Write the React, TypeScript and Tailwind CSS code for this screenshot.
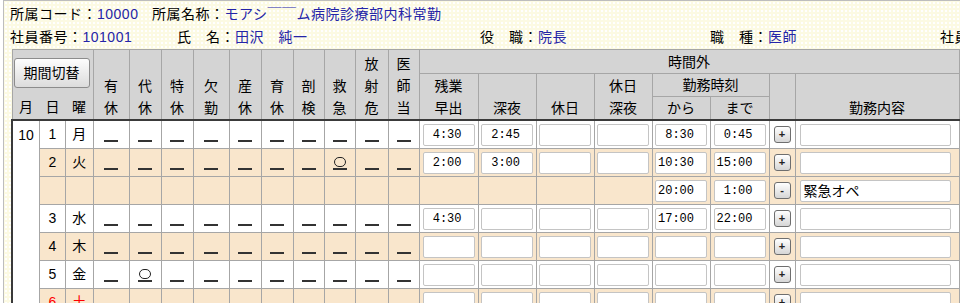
import React from "react";

const cols = [27, 26, 27, 36, 32, 32, 36, 32, 32, 31, 31, 33, 31, 59, 58, 58, 58, 58, 59, 26, 164];

const leaves = [
  ["有", "休"],
  ["代", "休"],
  ["特", "休"],
  ["欠", "勤"],
  ["産", "休"],
  ["育", "休"],
  ["剖", "検"],
  ["救", "急"],
  ["放", "射", "危"],
  ["医", "師", "当"],
];

type Row = {
  day?: string;
  wd?: string;
  peach: boolean;
  red?: boolean;
  sub?: boolean;
  mark?: number;
  t: (string | null)[];
  btn: string;
  memo?: string;
};

const rows: Row[] = [
  { day: "1", wd: "月", peach: false, t: [" 4:30", " 2:45", "", "", " 8:30", " 0:45"], btn: "+" },
  { day: "2", wd: "火", peach: true, mark: 7, t: [" 2:00", " 3:00", "", "", "10:30", "15:00"], btn: "+" },
  { peach: true, sub: true, t: [null, null, null, null, "20:00", " 1:00"], btn: "-", memo: "緊急オペ" },
  { day: "3", wd: "水", peach: false, t: [" 4:30", "", "", "", "17:00", "22:00"], btn: "+" },
  { day: "4", wd: "木", peach: true, t: ["", "", "", "", "", ""], btn: "+" },
  { day: "5", wd: "金", peach: false, mark: 1, t: ["", "", "", "", "", ""], btn: "+" },
  { day: "6", wd: "土", peach: true, red: true, t: ["", "", "", "", "", ""], btn: "+" },
];

const th = "border border-[#a6a6a6] p-0 font-normal text-[14px] leading-[22px] text-black";
const td = "border border-[#a6a6a6] p-0";

function TimeBox({ v }: { v: string }) {
  return (
    <div className="w-[52px] h-[22px] mx-auto border border-[#c4c4c4] rounded-[2px] bg-white pl-[2px] text-left whitespace-pre font-['Liberation_Mono',monospace] text-[12px] leading-[20px] text-black">
      {v}
    </div>
  );
}

function Mark({ on }: { on: boolean }) {
  return (
    <div className="h-[27px] flex flex-col items-center pt-[8px]">
      <div className={`w-[12px] h-[10px] rounded-full border-[1.5px] ${on ? "border-[#222]" : "border-transparent"}`} />
      <div className="mt-[1px] w-[14px] h-[2px] bg-[#333]" />
    </div>
  );
}

export default function App() {
  return (
    <div className="w-[960px] h-[303px] overflow-hidden bg-white font-['Liberation_Sans','Noto_Sans_CJK_JP',sans-serif]">
      <div className="ml-[3px] h-full border-l border-t border-[#bdbdbd] bg-[#fcfae3] bg-[radial-gradient(circle,#ffffff_0.8px,transparent_1.2px)] bg-[length:4px_4px]">
        {/* info */}
        <div className="h-[48px] pl-[6px] text-[14px] tracking-[0.5px] whitespace-nowrap">
          <div className="h-[25px] flex items-center pt-[2px]">
            <div className="w-[142px]">
              所属コード：<span className="text-[#2424a8]">10000</span>
            </div>
            <div>
              所属名称：<span className="text-[#2424a8]">モアシ￣￣ム病院診療部内科常勤</span>
            </div>
          </div>
          <div className="h-[23px] flex items-center">
            <div className="w-[167px] shrink-0">
              社員番号：<span className="text-[#2424a8]">101001</span>
            </div>
            <div className="w-[303px] shrink-0">
              氏　名：<span className="text-[#2424a8]">田沢　純一</span>
            </div>
            <div className="w-[230px] shrink-0">
              役　職：<span className="text-[#2424a8]">院長</span>
            </div>
            <div className="w-[230px] shrink-0">
              職　種：<span className="text-[#2424a8]">医師</span>
            </div>
            <div className="shrink-0">
              社員区分：<span className="text-[#2424a8]">常勤</span>
            </div>
          </div>
        </div>

        {/* table */}
        <div className="pl-[7px]">
          <table className="table-fixed border-collapse">
            <colgroup>
              {cols.map((w, i) => (
                <col key={i} style={{ width: w }} />
              ))}
            </colgroup>
            <thead className="bg-[#d4d4d4]">
              <tr className="h-[24px]">
                <th rowSpan={3} colSpan={3} className={`${th} align-top`}>
                  <div className="h-[68px] flex flex-col">
                    <div className="mt-[8px] ml-[1px] w-[76px] h-[30px] rounded-[3px] border border-[#8c8c8c] bg-linear-to-b from-[#fdfdfd] to-[#dcdcdc] flex items-center justify-center">
                      期間切替
                    </div>
                    <div className="mt-auto grid grid-cols-[27px_26px_27px] text-center">
                      <span>月</span>
                      <span>日</span>
                      <span>曜</span>
                    </div>
                  </div>
                </th>
                {leaves.map((l, i) => (
                  <th key={i} rowSpan={3} className={`${th} align-bottom`}>
                    {l.map((c, j) => (
                      <div key={j}>{c}</div>
                    ))}
                  </th>
                ))}
                <th colSpan={8} className={th}>
                  時間外
                </th>
              </tr>
              <tr className="h-[23px]">
                <th rowSpan={2} className={`${th} align-bottom`}>
                  <div>残業</div>
                  <div>早出</div>
                </th>
                <th rowSpan={2} className={`${th} align-bottom`}>
                  深夜
                </th>
                <th rowSpan={2} className={`${th} align-bottom`}>
                  休日
                </th>
                <th rowSpan={2} className={`${th} align-bottom`}>
                  <div>休日</div>
                  <div>深夜</div>
                </th>
                <th colSpan={2} className={th}>
                  勤務時刻
                </th>
                <th rowSpan={2} className={th}></th>
                <th rowSpan={2} className={`${th} align-bottom`}>
                  勤務内容
                </th>
              </tr>
              <tr className="h-[22px]">
                <th className={th}>から</th>
                <th className={th}>まで</th>
              </tr>
            </thead>
            <tbody className="text-[14px] text-black">
              {rows.map((r, ri) => {
                const top = ri === 0 ? "border-t-2 border-t-[#3a3a3a]" : "";
                const bg = r.peach ? "bg-[#f9e6cc]" : "bg-white";
                const col = r.red ? "text-[#ff0000]" : "";
                return (
                  <tr key={ri} className={`h-[28px] ${bg}`}>
                    {ri === 0 && (
                      <td rowSpan={rows.length} className={`${td} ${top} border-l-2 border-l-[#3a3a3a] bg-white align-top text-center pt-[4px]`}>
                        10
                      </td>
                    )}
                    <td className={`${td} ${top} text-center ${col}`}>{r.day ?? ""}</td>
                    <td className={`${td} ${top} text-center ${col}`}>{r.wd ?? ""}</td>
                    {leaves.map((_, i) => (
                      <td key={i} className={`${td} ${top}`}>
                        {!r.sub && <Mark on={r.mark === i} />}
                      </td>
                    ))}
                    {r.t.map((v, i) => (
                      <td key={i} className={`${td} ${top}`}>
                        {v !== null && <TimeBox v={v} />}
                      </td>
                    ))}
                    <td className={`${td} ${top}`}>
                      <div className="mx-auto w-[17px] h-[17px] rounded-[3px] border border-[#6e6e6e] bg-linear-to-b from-white to-[#d6d6d6] flex items-center justify-center text-[11px] leading-none font-bold text-[#222]">
                        {r.btn}
                      </div>
                    </td>
                    <td className={`${td} ${top}`}>
                      <div className="ml-[4px] w-[151px] h-[22px] border border-[#c4c4c4] rounded-[2px] bg-white pl-[3px] text-[14px] leading-[20px]">
                        {r.memo ?? ""}
                      </div>
                    </td>
                  </tr>
                );
              })}
            </tbody>
          </table>
        </div>
      </div>
    </div>
  );
}
